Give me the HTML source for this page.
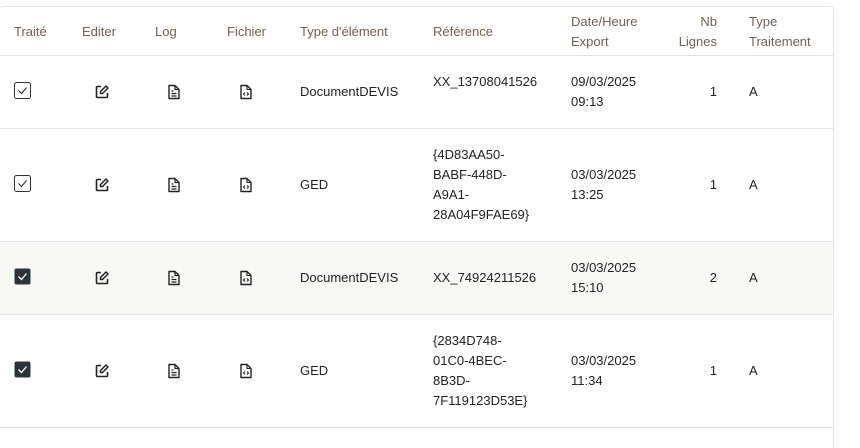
<html><head><style>
html,body{margin:0;height:448px;overflow:hidden;}
body{background:#fff;font-family:"Liberation Sans",sans-serif;font-size:13px;color:#222;}
.box{position:absolute;left:-1px;top:6px;width:833px;height:460px;border:1px solid #e6e6e6;border-radius:4px;}
.t{position:absolute;line-height:20px;}
.h{color:#6f625a;}
.line{position:absolute;left:0;width:833px;height:1px;background:#e4e4e4;}
svg{position:absolute;}
</style></head><body>
<div class="box"></div>
<div style="position:absolute;left:0;top:242px;width:833px;height:72px;background:#f8f8f6"></div>
<div class="line" style="top:55px"></div>
<div class="line" style="top:128px"></div>
<div class="line" style="top:241px"></div>
<div class="line" style="top:314px"></div>
<div class="line" style="top:427px"></div>
<div class="t h" style="left:14px;top:22px">Traité</div>
<div class="t h" style="left:82px;top:22px">Editer</div>
<div class="t h" style="left:155px;top:22px">Log</div>
<div class="t h" style="left:227px;top:22px">Fichier</div>
<div class="t h" style="left:300px;top:22px">Type d'élément</div>
<div class="t h" style="left:433px;top:22px">Référence</div>
<div class="t h" style="left:571px;top:12px">Date/Heure<br>Export</div>
<div class="t h" style="left:657px;top:12px;width:60px;text-align:right">Nb<br>Lignes</div>
<div class="t h" style="left:749px;top:12px">Type<br>Traitement</div>

<div id="rows"></div>
<script>
const rows=[[92,false,"DocumentDEVIS","XX_13708041526",2],[185,false,"GED","{4D83AA50-<br>BABF-448D-<br>A9A1-<br>28A04F9FAE69}",4],[278,true,"DocumentDEVIS","XX_74924211526",1],[371,true,"GED","{2834D748-<br>01C0-4BEC-<br>8B3D-<br>7F119123D53E}",4]];
const dates=["09/03/2025<br>09:13","03/03/2025<br>13:25","03/03/2025<br>15:10","03/03/2025<br>11:34"];
const nb=[1,1,2,1];
let h="";
rows.forEach((r,i)=>{const c=r[0];
h+= r[1]?`<svg style="left:14px;top:${c-10}px" width="17" height="17"><rect x="0.5" y="0.5" width="16" height="16" rx="2" fill="#2b343b"/><path d="M4.5 8.5l3 3 5-6" stroke="#fff" stroke-width="1.3" fill="none"/></svg>`
 :`<svg style="left:14px;top:${c-10}px" width="17" height="17"><rect x="0.5" y="0.5" width="16" height="16" rx="2" fill="#fff" stroke="#333"/><path d="M4.5 8.5l3 3 5-6" stroke="#333" stroke-width="1.1" fill="none"/></svg>`;
h+=`<svg style="left:94px;top:${c-8}px" width="16" height="16" viewBox="0 0 16 16"><path d="M7 2.5H3.5a1 1 0 0 0-1 1v9a1 1 0 0 0 1 1h9a1 1 0 0 0 1-1V9" stroke="#222" stroke-width="1.6" fill="none"/><path d="M6.5 9.5v-2l5.5-5.5 2 2-5.5 5.5z" stroke="#222" stroke-width="1.5" fill="none" stroke-linejoin="round"/></svg>`;
h+=`<svg style="left:167px;top:${c-8}px" width="14" height="16" viewBox="0 0 14 16"><path d="M2 1.5h6l4 4v9H2z" stroke="#222" stroke-width="1.4" fill="none" stroke-linejoin="round"/><path d="M8 1.5v4h4M4.5 7h2M4.5 9.5h5M4.5 12h5" stroke="#222" stroke-width="1.2" fill="none"/></svg>`;
h+=`<svg style="left:239px;top:${c-8}px" width="14" height="16" viewBox="0 0 14 16"><path d="M2 1.5h6l4 4v9H2z" stroke="#222" stroke-width="1.4" fill="none" stroke-linejoin="round"/><path d="M8 1.5v4h4M6 8.5l-1.5 1.5 1.5 1.5M8 8.5l1.5 1.5-1.5 1.5" stroke="#222" stroke-width="1.1" fill="none"/></svg>`;
h+=`<div class="t" style="left:300px;top:${c-10}px">${r[2]}</div>`;
h+=`<div class="t" style="left:433px;top:${c-10*r[4]}px">${r[3]}</div>`;
h+=`<div class="t" style="left:571px;top:${c-20}px">${dates[i]}</div>`;
h+=`<div class="t" style="left:657px;top:${c-10}px;width:60px;text-align:right">${nb[i]}</div>`;
h+=`<div class="t" style="left:749px;top:${c-10}px">A</div>`;
});
document.getElementById("rows").innerHTML=h;
</script>
</body></html>
